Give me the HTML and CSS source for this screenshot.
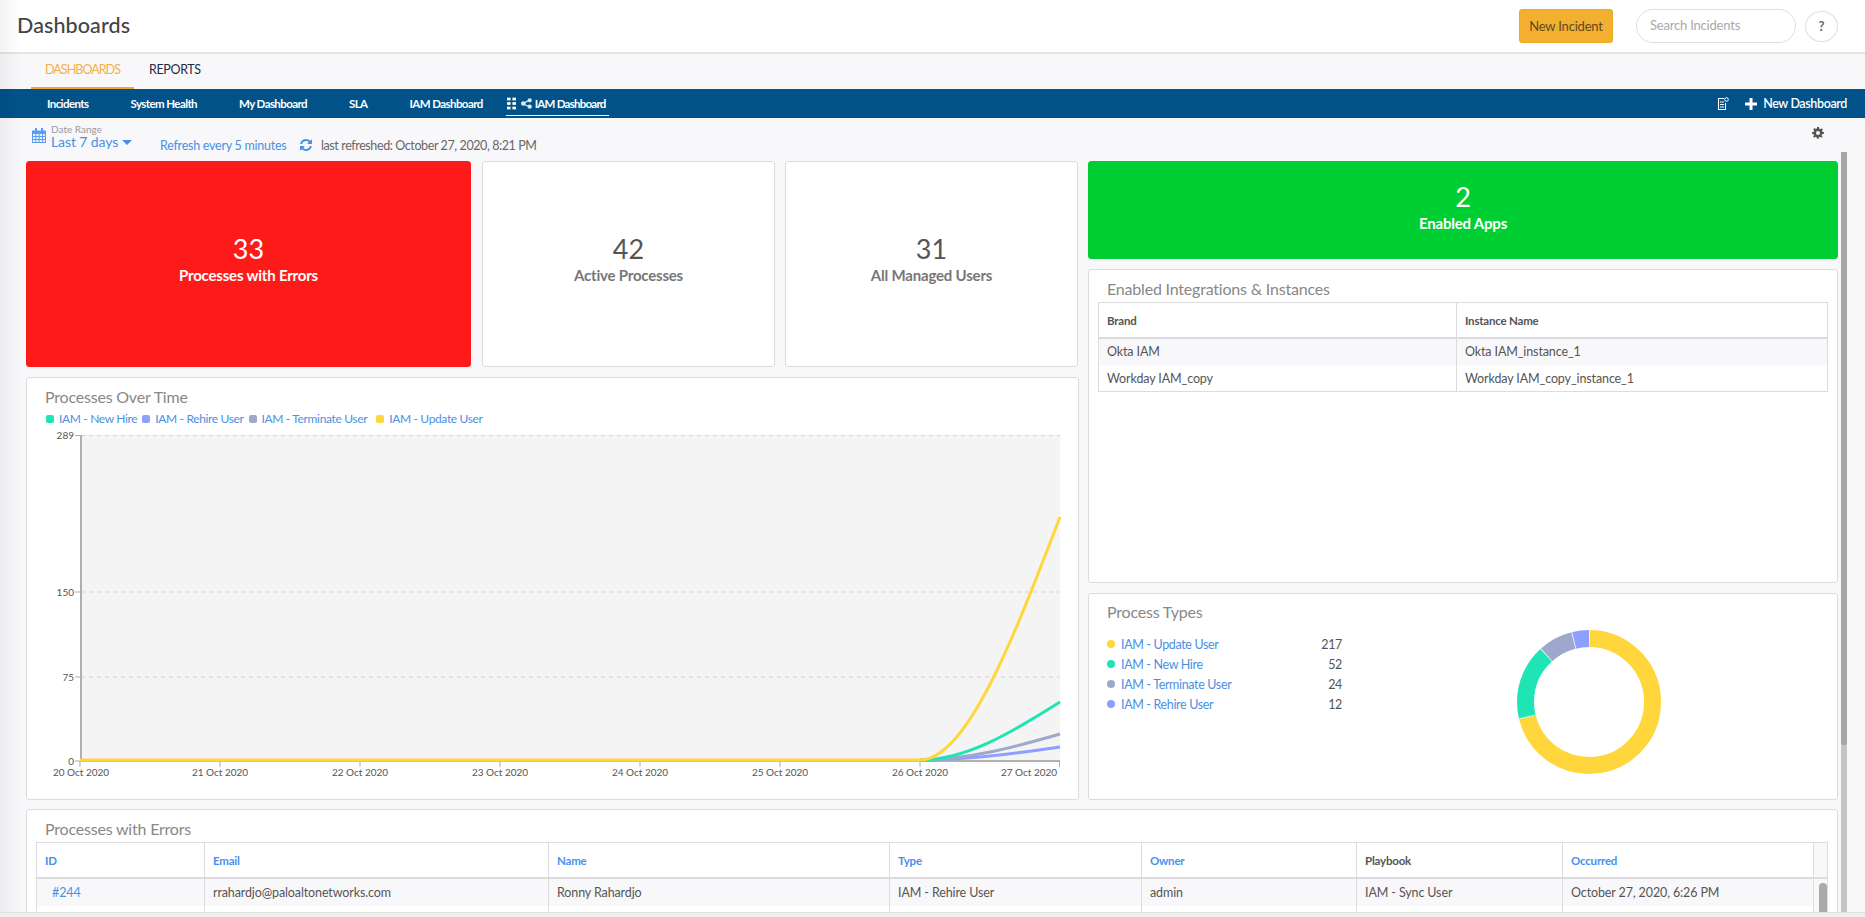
FILE: index.html
```html
<!DOCTYPE html>
<html lang="en">
<head>
<meta charset="utf-8">
<title>Dashboards</title>
<link rel="stylesheet" href="styles.css">
</head>
<body>
<div class="page">
  <header class="topbar">
    <h1 class="title">Dashboards</h1>
    <div class="top-actions">
      <button class="new-incident">New Incident</button>
      <div class="search">Search Incidents</div>
      <div class="help">?</div>
    </div>
  </header>
  <nav class="tabs">
    <a class="tab tab-active">DASHBOARDS</a>
    <a class="tab">REPORTS</a>
  </nav>
  <nav class="dashbar">
    <a class="dash-link">Incidents</a>
    <a class="dash-link">System Health</a>
    <a class="dash-link">My Dashboard</a>
    <a class="dash-link">SLA</a>
    <a class="dash-link">IAM Dashboard</a>
    <a class="dash-link dash-current">
      <svg class="ic-grid" viewBox="0 0 10 13" width="9" height="13"><g fill="#fff"><rect x="0" y="0" width="4" height="3"/><rect x="6" y="0" width="4" height="3"/><rect x="0" y="5" width="4" height="3"/><rect x="6" y="5" width="4" height="3"/><rect x="0" y="10" width="4" height="3"/><rect x="6" y="10" width="4" height="3"/></g></svg>
      <svg class="ic-share" viewBox="0 0 12 12" width="11" height="11"><g fill="#dfe8ef"><circle cx="2.5" cy="6" r="2.5"/><circle cx="9.5" cy="2.5" r="2.3"/><circle cx="9.5" cy="9.5" r="2.3"/><path d="M2 5.2 9 1.8l.6 1.2-7 3.6zM2 6.8l7 3.6.6-1.2-7-3.6z"/></g></svg>
      <span>IAM Dashboard</span>
    </a>
    <div class="dash-right">
      <svg viewBox="0 0 12 13" width="12" height="13" fill="none" stroke="#fff"><path d="M7 1.5H1.5v11h7V6" stroke-width="1.1"/><path d="M3 5h4M3 7.5h4M3 10h4" stroke-width="1.1"/><circle cx="9.5" cy="2.5" r="1.8" stroke-width="1"/></svg>
      <span class="new-dash"><svg viewBox="0 0 12 12" width="12" height="12"><path d="M4.5 0h3v4.500H12v3H7.500V12h-3V7.500H0v-3h4.500z" fill="#fff"/></svg>New Dashboard</span>
    </div>
  </nav>
  <section class="toolbar">
    <svg class="ic-cal" viewBox="0 0 14 15" width="14" height="15"><path d="M0 2.500h14V15H0z" fill="#5b9df0"/><path d="M3 0h2v4H3zM9 0h2v4H9z" fill="#5b9df0"/><path d="M1 6h2.400v2H1zM4.300 6h2.400v2H4.300zM7.600 6H10v2H7.600zM10.900 6H13v2h-2.100zM1 9h2.400v2H1zM4.300 9h2.400v2H4.300zM7.600 9H10v2H7.600zM10.900 9H13v2h-2.100zM1 12h2.400v2H1zM4.300 12h2.400v2H4.300zM7.600 12H10v2H7.600zM10.900 12H13v2h-2.100z" fill="#e9f1fc"/></svg>
    <div class="range">
      <span class="range-label">Date Range</span>
      <span class="range-value">Last 7 days<i class="caret"></i></span>
    </div>
    <a class="refresh">Refresh every 5 minutes</a>
    <svg class="ic-refresh" viewBox="0 0 1536 1536" width="12" height="12"><path fill="#4a90e2" d="M1511 928q0 5-1 7-64 268-268 434.500T764 1536q-146 0-282.500-55T238 1324l-129 129q-19 19-45 19t-45-19-19-45V960q0-26 19-45t45-19h448q26 0 45 19t19 45-19 45l-137 137q71 66 161 102t187 36q134 0 250-65t186-179q11-17 53-117 8-23 30-23h192q13 0 22.500 9.500t9.500 22.500zm25-800v448q0 26-19 45t-45 19h-448q-26 0-45-19t-19-45 19-45l138-138Q969 256 768 256q-134 0-250 65T332 500q-11 17-53 117-8 23-30 23H50q-13 0-22.500-9.500T18 608v-7q65-268 270-434.500T768 0q146 0 284 55.500T1297 212l130-129q19-19 45-19t45 19 19 45z"/></svg>
    <span class="refreshed">last refreshed: October 27, 2020, 8:21 PM</span>
    <svg class="ic-gear" viewBox="0 0 24 24" width="12" height="12"><path fill="#555" d="M24 13.700v-3.400l-3.100-.6a9 9 0 0 0-.9-2.100l1.800-2.600-2.400-2.400-2.600 1.800a9 9 0 0 0-2.100-.9L13.700 0h-3.400l-.6 3.100a9 9 0 0 0-2.100.9L5 2.200 2.600 4.600 4.400 7.200a9 9 0 0 0-.9 2.100L0 10.300v3.400l3.100.6c.2.700.5 1.400.9 2.100l-1.800 2.600 2.400 2.400 2.600-1.800c.7.400 1.400.7 2.100.9l.6 3.100h3.400l.6-3.100c.7-.2 1.400-.5 2.100-.9l2.600 1.800 2.400-2.400-1.800-2.600c.4-.7.700-1.400.9-2.100zM12 16a4 4 0 1 1 0-8 4 4 0 0 1 0 8z"/></svg>
  </section>

  <main class="content">
    <div class="columns">
      <div class="col-left">
        <div class="stat-row">
          <div class="card stat stat-red stat-w1"><div class="stat-num">33</div><div class="stat-label">Processes with Errors</div></div>
          <div class="card stat stat-w2"><div class="stat-num">42</div><div class="stat-label">Active Processes</div></div>
          <div class="card stat stat-w2"><div class="stat-num">31</div><div class="stat-label">All Managed Users</div></div>
        </div>
        <div class="card chart-card">
          <h2 class="card-title">Processes Over Time</h2>
          <div class="chart-legend">
            <span class="lg"><i class="sq c-teal"></i>IAM - New Hire</span>
            <span class="lg"><i class="sq c-blue"></i>IAM - Rehire User</span>
            <span class="lg lg-wide"><i class="sq c-gray"></i>IAM - Terminate User</span>
            <span class="lg"><i class="sq c-yellow"></i>IAM - Update User</span>
          </div>
          <svg class="chart" viewBox="0 0 1050 366" width="1050" height="366">
            <g transform="translate(-27 -430)">
              <rect x="81" y="435" width="979" height="326" fill="#f4f4f4"/>
              <g stroke="#d4d4d4" stroke-dasharray="4 4" fill="none">
                <path d="M81 435.500H1060M81 592H1060M81 677H1060"/>
              </g>
              <path d="M81 435V762M1060 761H80" stroke="#b0b0b0" stroke-width="2" fill="none"/>
              <path d="M75 435.500h6M75 592h6M75 677h6M75 761h6M80 761v6M220 761v6M360 761v6M500 761v6M640 761v6M780 761v6M920 761v6M1059.500 761v6" stroke="#aaa" fill="none"/>
              <g class="axis-y">
                <text x="74" y="439">289</text>
                <text x="74" y="596">150</text>
                <text x="74" y="681">75</text>
                <text x="74" y="765">0</text>
              </g>
              <g class="axis-x">
                <text x="81" y="776">20 Oct 2020</text>
                <text x="220" y="776">21 Oct 2020</text>
                <text x="360" y="776">22 Oct 2020</text>
                <text x="500" y="776">23 Oct 2020</text>
                <text x="640" y="776">24 Oct 2020</text>
                <text x="780" y="776">25 Oct 2020</text>
                <text x="920" y="776">26 Oct 2020</text>
                <text x="1029" y="776">27 Oct 2020</text>
              </g>
              <g fill="none" stroke-width="3">
                <path stroke="#8d9fff" d="M920 760C966.700 760 1013.300 754 1060 747"/>
                <path stroke="#9ea7cc" d="M920 760C966.700 760 1013.300 747.500 1060 734"/>
                <path stroke="#1fe5b4" d="M920 760C966.700 760 1013.300 731.500 1060 702"/>
                <path stroke="#ffd63c" d="M80 760H920C966.700 760 1013.300 639 1060 517"/>
              </g>
            </g>
          </svg>
        </div>
      </div>
      <div class="col-right">
        <div class="card stat stat-green"><div class="stat-num">2</div><div class="stat-label">Enabled Apps</div></div>
        <div class="card integ-card">
          <h2 class="card-title">Enabled Integrations &amp; Instances</h2>
          <table class="tbl tbl-integ">
            <thead><tr><th class="i1">Brand</th><th>Instance Name</th></tr></thead>
            <tbody>
              <tr class="shade"><td>Okta IAM</td><td>Okta IAM_instance_1</td></tr>
              <tr class="row-low"><td>Workday IAM_copy</td><td>Workday IAM_copy_instance_1</td></tr>
            </tbody>
          </table>
        </div>
        <div class="card types-card">
          <h2 class="card-title">Process Types</h2>
          <div class="types-body">
            <ul class="types">
              <li><i class="dot c-yellow"></i><span class="types-name">IAM - Update User</span><span class="types-val">217</span></li>
              <li><i class="dot c-teal"></i><span class="types-name">IAM - New Hire</span><span class="types-val">52</span></li>
              <li><i class="dot c-gray"></i><span class="types-name">IAM - Terminate User</span><span class="types-val">24</span></li>
              <li><i class="dot c-blue"></i><span class="types-name">IAM - Rehire User</span><span class="types-val">12</span></li>
            </ul>
            <svg class="donut" viewBox="-73 -73 146 146" width="146" height="146">
              <g fill="none" stroke-width="17" transform="rotate(-90)">
                <circle r="63.500" stroke="#ffd63c" pathLength="305" stroke-dasharray="217 88"/>
                <circle r="63.500" stroke="#1fe5b4" pathLength="305" stroke-dasharray="52 253" stroke-dashoffset="-217"/>
                <circle r="63.500" stroke="#9ea7cc" pathLength="305" stroke-dasharray="24 281" stroke-dashoffset="-269"/>
                <circle r="63.500" stroke="#8d9fff" pathLength="305" stroke-dasharray="12 293" stroke-dashoffset="-293"/>
                <circle r="63.500" stroke="#fff" pathLength="305" stroke-width="18" stroke-dasharray="0.500 216.500 0.500 51.500 0.500 23.500 0.500 11.500"/>
              </g>
            </svg>
          </div>
        </div>
      </div>
    </div>
    <div class="card errors-card">
      <h2 class="card-title">Processes with Errors</h2>
      <table class="tbl tbl-errors">
        <thead>
          <tr>
            <th class="e1 th-link">ID</th><th class="e2 th-link">Email</th><th class="e3 th-link">Name</th><th class="e4 th-link">Type</th><th class="e5 th-link">Owner</th><th class="e6">Playbook</th><th class="e7 th-link">Occurred</th><th class="e8"></th>
          </tr>
        </thead>
        <tbody>
          <tr class="shade">
            <td class="id-cell">#244</td><td>rrahardjo@paloaltonetworks.com</td><td>Ronny Rahardjo</td><td>IAM - Rehire User</td><td>admin</td><td>IAM - Sync User</td><td>October 27, 2020, 6:26 PM</td><td class="inner-track"><i class="inner-thumb"></i></td>
          </tr>
          <tr class="row-blank"><td></td><td></td><td></td><td></td><td></td><td></td><td></td><td class="inner-track"><i class="inner-thumb inner-thumb-2"></i></td></tr>
        </tbody>
      </table>
    </div>
  </main>
  <div class="left-shade"></div>
  <div class="vscroll"><i class="vthumb"></i></div>
  <div class="hstrip"></div>
</div>
</body>
</html>
```
FILE: styles.css
```css
* { box-sizing: border-box; }
html, body { margin: 0; padding: 0; height: 917px; overflow: hidden; }
body { font-family: "Lato", "Open Sans", sans-serif; color: #555; background: #f8f8fa; font-size: 13px; }
.page { position: relative; width: 1865px; height: 917px; overflow: hidden; display: flex; flex-direction: column; }

.topbar { height: 54px; flex: none; background: #fff; border-bottom: 2px solid #e4e4e6; display: flex; align-items: center; justify-content: space-between; padding-left: 17px; }
.title { margin: 0 0 3px; font-size: 21.500px; font-weight: 500; color: #444; letter-spacing: .1px; }
.top-actions { display: flex; align-items: center; }
.new-incident { width: 94px; height: 34px; background: #f3af30; border: 1px solid #eba825; border-radius: 3px; color: #5e4a20; font: 13px "Lato", sans-serif; letter-spacing: -.2px; padding: 0; }
.search { width: 160px; height: 34px; margin-left: 23px; border: 1px solid #dedede; border-radius: 17px; padding-left: 13px; line-height: 30px; color: #a9a9a9; font-size: 13px; letter-spacing: -.2px; }
.help { width: 33px; height: 31px; margin: 0 27px 0 9px; border: 1px solid #dedede; border-radius: 50%; text-align: center; line-height: 29px; font-weight: 700; font-size: 13px; color: #666; }

.tabs { height: 35px; flex: none; display: flex; padding-left: 31px; }
.tab { height: 35px; padding: 0 14px; line-height: 31px; font-size: 12.500px; color: #1e2a44; letter-spacing: -.35px; }
.tab-active { width: 103px; color: #f3af4c; border-bottom: 2px solid #f0a830; margin-right: 15px; text-align: center; letter-spacing: -.95px; padding: 0; }
.tab:last-child { padding: 0; }

.dashbar { height: 29px; flex: none; background: #005288; display: flex; align-items: center; padding: 0 18px 0 47px; color: #fff; }
.dash-link { font-size: 11.500px; font-weight: 700; color: #fff; margin-right: 42px; letter-spacing: -.58px; white-space: nowrap; }
.dash-current { display: flex; align-items: center; height: 21px; margin: 3px 0 0 -19px; padding: 0 1px 3px; border-bottom: 1px solid #fff; width: 103px; letter-spacing: -.75px; }
.ic-grid { margin-right: 5px; flex: none; }
.ic-share { margin-right: 3px; flex: none; }
.dash-right { margin-left: auto; display: flex; align-items: center; }
.new-dash { display: flex; align-items: center; margin-left: 16px; font-size: 12.500px; font-weight: 600; letter-spacing: -.38px; }
.new-dash svg { margin-right: 6px; }

.toolbar { height: 43px; flex: none; display: flex; align-items: flex-start; padding: 10px 0 0 32px; position: relative; }
.ic-cal { flex: none; margin-right: 5px; }
.range { display: flex; flex-direction: column; width: 109px; margin-top: -4px; }
.range-label { font-size: 10px; color: #9a9a9a; line-height: 10px; }
.range-value { font-size: 14px; line-height: 16px; color: #4a90e2; letter-spacing: -.1px; }
.caret { display: inline-block; margin: 0 0 2px 4px; border: 5px solid transparent; border-top-color: #4a90e2; border-bottom: 0; }
.refresh { font-size: 12.500px; color: #4a90e2; margin-top: 10px; letter-spacing: -.25px; width: 140px; white-space: nowrap; }
.ic-refresh { margin-top: 11px; flex: none; }
.refreshed { font-size: 12.500px; color: #666; margin: 10px 0 0 9px; letter-spacing: -.4px; white-space: nowrap; }
.ic-gear { margin-left: auto; margin-right: 41px; margin-top: -1px; flex: none; }

.content { padding: 0 27px 0 26px; flex: 1; min-height: 0; }
.columns { display: flex; gap: 9px; height: 639px; }
.col-left { width: 1053px; display: flex; flex-direction: column; gap: 10px; }
.col-right { width: 750px; display: flex; flex-direction: column; gap: 10px; }
.card { background: #fff; border: 1px solid #dcdcde; border-radius: 3px; }
.stat-row { display: flex; gap: 10px; height: 206px; }
.stat { display: flex; flex-direction: column; align-items: center; justify-content: center; padding-bottom: 10px; }
.stat-w1 { width: 445px; margin-right: 1px; }
.stat-w2 { width: 293px; }
.stat-num { font-size: 27px; line-height: 31px; color: #555; }
.stat-label { font-size: 15px; line-height: 20px; font-weight: 700; color: #777; letter-spacing: -.2px; margin-top: 1px; }
.stat-red { background: #ff1a1a; border-color: #ff1a1a; }
.stat-green { background: #00cf33; border-color: #00cf33; height: 98px; padding-bottom: 7px; }
.stat-red .stat-num, .stat-red .stat-label, .stat-green .stat-num, .stat-green .stat-label { color: #fff; }

.card-title { margin: 0; font-size: 16px; font-weight: 400; color: #888; letter-spacing: -.2px; line-height: 20px; }
.chart-card { height: 423px; padding: 9px 0 0 18px; position: relative; }
.chart-legend { display: flex; margin: 3px 0 0 1px; font-size: 12px; line-height: 18px; color: #4a90e2; letter-spacing: -.35px; }
.lg { display: flex; align-items: center; margin-right: 5px; }
.lg-wide { margin-right: 9px; }
.sq { width: 8px; height: 8px; border-radius: 2px; margin-right: 5px; flex: none; }
.dot { width: 8px; height: 8px; border-radius: 50%; flex: none; margin-right: 6px; }
.c-teal { background: #1fe5b4; }
.c-blue { background: #8d9fff; }
.c-gray { background: #9ea7cc; }
.c-yellow { background: #ffd63c; }
.chart { position: absolute; left: 0; top: 52px; }
.axis-y text { font: 10px "Lato", sans-serif; fill: #555; text-anchor: end; }
.axis-x text { font: 10px "Lato", sans-serif; fill: #555; text-anchor: middle; }

.integ-card { height: 314px; padding: 9px 9px 0; }
.integ-card .card-title { padding-left: 9px; }
.errors-card .card-title { padding-left: 9px; }
.tbl { border-collapse: collapse; table-layout: fixed; font-size: 12.500px; letter-spacing: -.12px; margin-top: 3px; color: #555; }
.tbl th { text-align: left; font-weight: 700; font-size: 11.500px; padding: 1px 8px 0; border: 1px solid #dcdcde; border-bottom-width: 2px; height: 35px; color: #555; letter-spacing: -.2px; }
.tbl td { padding: 0 8px; border-left: 1px solid #dcdcde; border-right: 1px solid #dcdcde; height: 27px; white-space: nowrap; }
.tbl tbody tr:last-child td { border-bottom: 1px solid #dcdcde; }
.tbl .row-low td { padding-top: 2px; }
.shade td { background: #f8f8fa; }
.tbl-integ { width: 730px; }
.i1 { width: 358px; }
.types-card { height: 207px; padding: 8px 0 0 18px; }
.types-card .card-title { line-height: 20px; }
.types-body { display: flex; position: relative; }
.types { list-style: none; margin: 12px 0 0; padding: 0; width: 235px; font-size: 12.500px; letter-spacing: -.35px; color: #4a90e2; }
.types li { display: flex; align-items: center; height: 20px; }
.types-name { flex: 1; }
.types-val { color: #555; }
.donut { margin: 7px 0 0 174px; flex: none; }

.errors-card { margin-top: 9px; height: 160px; padding: 9px 9px 0; overflow: hidden; }
.tbl-errors { width: 1791px; }
.th-link { color: #4a90f0 !important; }
.e1 { width: 168px; }
.e2 { width: 344px; }
.e3 { width: 341px; }
.e4 { width: 252px; }
.e5 { width: 215px; }
.e6 { width: 206px; }
.e7 { width: 251px; }
.e8 { width: 14px; background: #f8f8fa; padding: 0 !important; }
.id-cell { color: #4a90e2; padding-left: 15px !important; }
.tbl-errors td { height: 28px; }
.row-blank td { height: 40px; background: #fff; vertical-align: top; }
.inner-track { position: relative; padding: 0 !important; background: #f8f8fa !important; }
.inner-thumb { position: absolute; left: 5px; right: 0; top: 4px; bottom: 0; background: #aaa; border-radius: 4px 4px 0 0; }
.inner-thumb-2 { top: 0; border-radius: 0; }

.left-shade { position: absolute; left: 0; top: 0; bottom: 0; width: 20px; background: linear-gradient(to right, rgba(0,0,0,.05), rgba(0,0,0,0)); pointer-events: none; }
.vscroll { position: absolute; left: 1841px; top: 152px; bottom: 0; width: 6px; background: #c4c4c4; }
.vthumb { display: block; height: 593px; background: #a6a6a6; border-radius: 0 0 2px 2px; }
.hstrip { position: absolute; left: 0; right: 0; bottom: 0; height: 5px; background: #f0f0f1; border-top: 1px solid #e2e2e2; }
```
